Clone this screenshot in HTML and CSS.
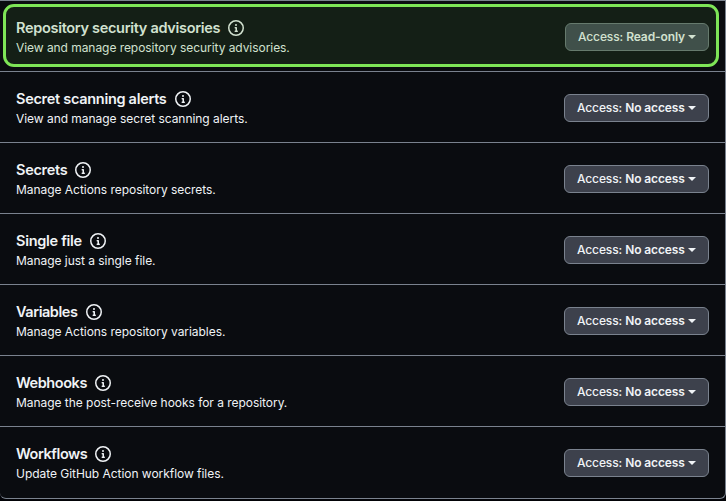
FILE: index.html
```
<!DOCTYPE html>
<html lang="en">
<head>
<meta charset="utf-8">
<title>Repository permissions</title>
<link rel="stylesheet" href="styles.css">
</head>
<body>
<svg width="0" height="0" class="defs" aria-hidden="true">
<symbol id="info" viewBox="0 0 16 16"><path d="M0 8a8 8 0 1 1 16 0A8 8 0 0 1 0 8Zm8-6.5a6.500 6.500 0 1 0 0 13 6.500 6.500 0 0 0 0-13ZM6.500 7.750A.750.750 0 0 1 7.250 7h1a.750.750 0 0 1 .750.750v2.750h.250a.750.750 0 0 1 0 1.500h-2a.750.750 0 0 1 0-1.500h.250v-2h-.250a.750.750 0 0 1-.750-.750ZM8 6a1 1 0 1 1 0-2 1 1 0 0 1 0 2Z"/></symbol>
</svg>
<ul class="permissions">
<li class="row highlighted"><div class="info"><h2 class="title"><span>Repository security advisories</span><svg class="icon"><use href="#info"/></svg></h2><p class="desc">View and manage repository security advisories.</p></div><button class="access"><span>Access: <b>Read-only</b></span><i class="caret"></i></button></li>
<li class="row"><div class="info"><h2 class="title"><span>Secret scanning alerts</span><svg class="icon"><use href="#info"/></svg></h2><p class="desc">View and manage secret scanning alerts.</p></div><button class="access"><span>Access: <b>No access</b></span><i class="caret"></i></button></li>
<li class="row"><div class="info"><h2 class="title"><span>Secrets</span><svg class="icon"><use href="#info"/></svg></h2><p class="desc">Manage Actions repository secrets.</p></div><button class="access"><span>Access: <b>No access</b></span><i class="caret"></i></button></li>
<li class="row"><div class="info"><h2 class="title"><span>Single file</span><svg class="icon"><use href="#info"/></svg></h2><p class="desc">Manage just a single file.</p></div><button class="access"><span>Access: <b>No access</b></span><i class="caret"></i></button></li>
<li class="row"><div class="info"><h2 class="title tight"><span>Variables</span><svg class="icon"><use href="#info"/></svg></h2><p class="desc">Manage Actions repository variables.</p></div><button class="access"><span>Access: <b>No access</b></span><i class="caret"></i></button></li>
<li class="row"><div class="info"><h2 class="title tight"><span>Webhooks</span><svg class="icon"><use href="#info"/></svg></h2><p class="desc">Manage the post-receive hooks for a repository.</p></div><button class="access"><span>Access: <b>No access</b></span><i class="caret"></i></button></li>
<li class="row"><div class="info"><h2 class="title tight"><span>Workflows</span><svg class="icon"><use href="#info"/></svg></h2><p class="desc">Update GitHub Action workflow files.</p></div><button class="access"><span>Access: <b>No access</b></span><i class="caret"></i></button></li>
</ul>
</body>
</html>
```

FILE: styles.css
```
*, *::after { box-sizing: border-box; }
body { margin: 0; background: #020307; color: #f0f3f6; font-family: Inter, "Liberation Sans", sans-serif; overflow: hidden; }
.defs { display: block; position: absolute; }
.permissions { list-style: none; margin: 0; padding: 0; width: 726px; height: 499px; background: #0a0c10; border-right: 1px solid #7a828e; border-bottom: 1px solid #7a828e; border-radius: 0 0 6px 6px; }
.row { position: relative; display: flex; justify-content: space-between; align-items: flex-start; height: 71px; padding: 17px 16px 0; border-top: 1px solid #7a828e; }
.title { display: flex; align-items: center; gap: 8px; height: 20px; margin: 0; font-size: 14.5px; font-weight: 600; line-height: 20px; letter-spacing: -.29px; white-space: nowrap; }
.tight { letter-spacing: -.44px; }
.icon { width: 16px; height: 16px; fill: currentColor; }
.desc { margin: 1px 0 0; font-size: 12px; line-height: 18px; letter-spacing: -.04px; white-space: nowrap; }
.access { display: flex; align-items: center; justify-content: space-between; width: 145px; height: 28px; margin: 5px 0 0; padding: 0 12px; border: 1px solid #7a828e; border-radius: 6px; background: #3d414c; color: #f0f3f6; font: 500 12px/18px Inter, sans-serif; letter-spacing: -.11px; white-space: nowrap; }
.access b { font-weight: 600; }
.caret { border: 4px solid transparent; border-top-color: currentColor; border-bottom: 0; }
.highlighted::after { content: ""; position: absolute; left: 3px; top: 3px; width: 716px; height: 63px; border: 3px solid #7ee557; border-radius: 11px; background: rgba(126, 229, 87, .09); }
.highlighted { color: #dbe1dc; }
.highlighted .title { letter-spacing: -.31px; }
.highlighted .desc { letter-spacing: -.055px; }
.highlighted .access { width: 144px; background: #3b4149; border-color: #657070; color: #dbe1dc; }
```
